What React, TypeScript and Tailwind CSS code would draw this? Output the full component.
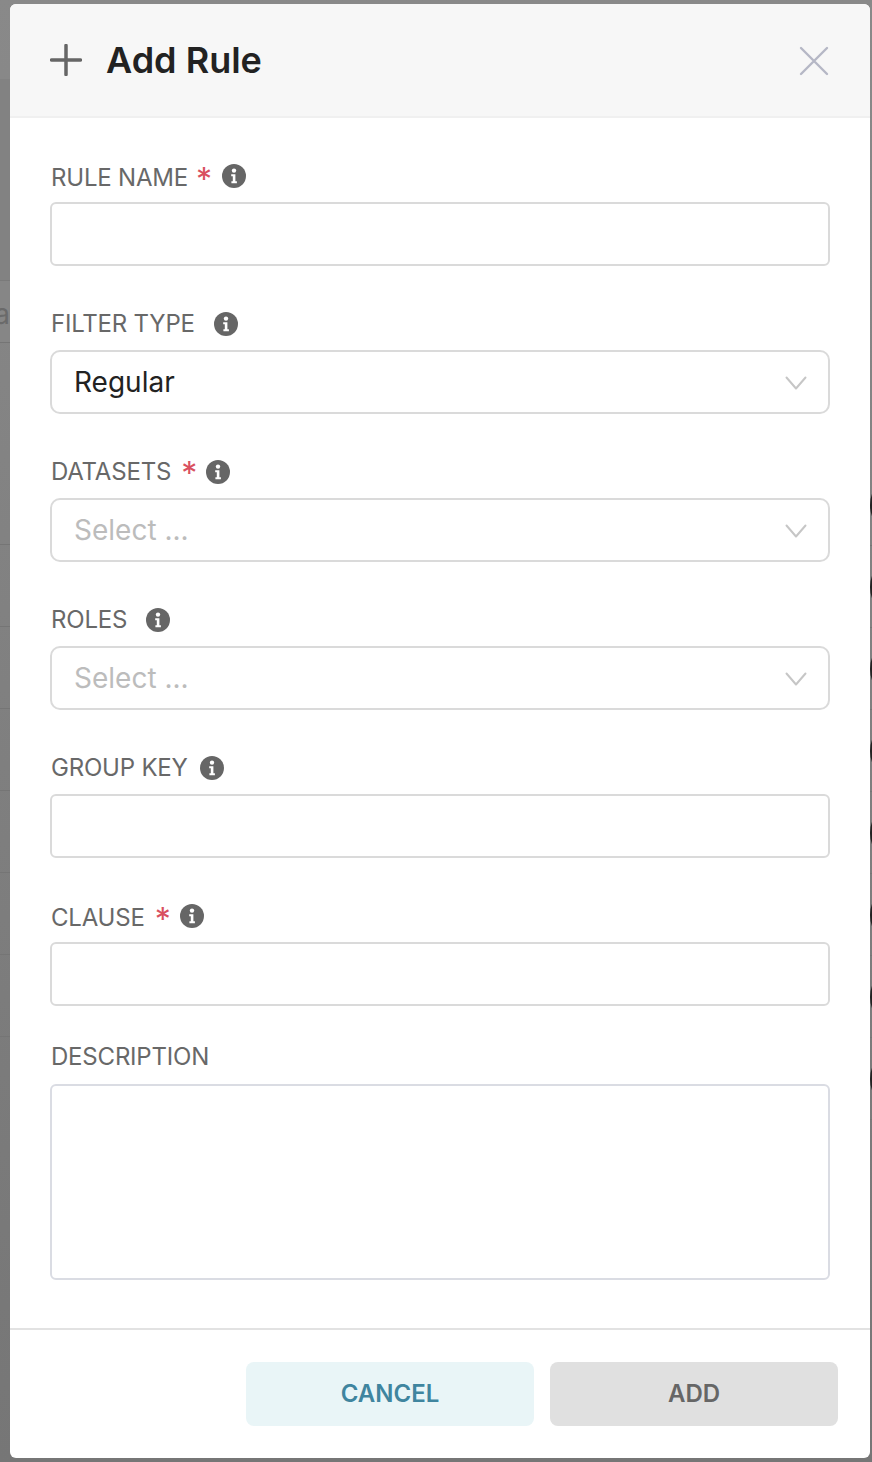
import React from "react";

const font = { fontFamily: "Inter, 'Liberation Sans', sans-serif" };

function Info() {
  return (
    <svg width="24" height="24" viewBox="0 0 24 24" className="block shrink-0">
      <circle cx="12" cy="12" r="12" fill="#666666" />
      <circle cx="12" cy="6.6" r="2.2" fill="#ffffff" />
      <path d="M9.2 10.3h4.2v7h1.5v2H9.4v-2h1.4v-5H9.2z" fill="#ffffff" />
    </svg>
  );
}

function Chevron() {
  return (
    <svg width="22" height="14" viewBox="0 0 22 14" fill="none" className="mt-[2px] block">
      <path d="M1.5 1.5 11 12.5 20.5 1.5" stroke="#c6c6c6" strokeWidth="2" strokeLinecap="round" strokeLinejoin="round" />
    </svg>
  );
}

function Label({ text, star, gap, className }: { text: string; star?: string; gap: string; className?: string }) {
  return (
    <div className={`flex h-[52px] items-center pl-px text-2xl leading-none tracking-[-0.2px] text-[#686868] ${className ?? ""}`}>
      <span>{text}</span>
      {star && <span className={`${star} h-[18px] text-[32px] leading-[22px] text-[#d9505f]`}>*</span>}
      <span className={gap}>
        <Info />
      </span>
    </div>
  );
}

function TextInput() {
  return <input className="block h-16 w-full rounded-[6px] border-2 border-[#dadada] bg-white px-6 text-[28px] outline-none" />;
}

function Select({ value, placeholder }: { value?: string; placeholder?: string }) {
  return (
    <div className="flex h-16 w-full items-center justify-between rounded-[10px] border-2 border-[#dadada] bg-white pl-[22px] pr-[21px] text-[28px]">
      {value ? <span className="text-[#222222]">{value}</span> : <span className="text-[#bcbcbc]">{placeholder}</span>}
      <Chevron />
    </div>
  );
}

const leftRows = [
  "h-[80px] border-b border-[#828282]",
  "h-[201px] border-b border-[#7a7a7a] bg-[#828282]",
  "h-[62px] border-b border-[#757575] bg-[#868686]",
  "h-[202px] border-b border-[#757575]",
  "h-[82px] border-b border-[#757575]",
  "h-[82px] border-b border-[#757575]",
  "h-[82px] border-b border-[#757575]",
  "h-[82px] border-b border-[#757575]",
  "h-[82px] border-b border-[#757575]",
  "h-[82px] border-b border-[#757575]",
];

const rightRows = Array.from({ length: 8 }, (_, i) => i);

export default function App() {
  return (
    <div style={font} className="flex h-[1462px] w-[872px] overflow-hidden bg-linear-to-b from-[#898989] to-[#767676]">
      <div className="flex w-[10px] shrink-0 flex-col">
        {leftRows.map((c, i) => (
          <div key={i} className={`${c} flex items-center justify-end overflow-hidden`}>
            {i === 2 && <span className="mt-[4px] text-[28px] leading-none text-[#6a6a6a]">a</span>}
          </div>
        ))}
      </div>

      <div className="mt-1 flex h-[1454px] w-[860px] shrink-0 flex-col overflow-hidden rounded-[6px] bg-white">
        <div className="flex h-[114px] items-center justify-between border-b-2 border-[#f0f0f0] bg-[#f7f7f7] pl-10 pr-[41px]">
          <div className="flex items-center gap-6">
            <svg width="32" height="32" viewBox="0 0 32 32" fill="none" className="block">
              <path d="M16 1.5v29M1.5 16h29" stroke="#666666" strokeWidth="3.5" strokeLinecap="round" />
            </svg>
            <span className="text-4xl font-semibold leading-none text-[#222222]">Add Rule</span>
          </div>
          <svg width="30" height="30" viewBox="0 0 30 30" fill="none" className="mt-px block">
            <path d="M2 2l26 26M28 2 2 28" stroke="#b5b7c5" strokeWidth="2.4" strokeLinecap="round" />
          </svg>
        </div>

        <div className="flex flex-1 flex-col gap-8 px-10 pt-8">
          <div>
            <Label text="RULE NAME" star="ml-[8px]" gap="ml-[10px] -mt-[4px]" className="pt-1" />
            <TextInput />
          </div>
          <div>
            <Label text="FILTER TYPE" gap="ml-[19px]" />
            <Select value="Regular" />
          </div>
          <div>
            <Label text="DATASETS" star="ml-[10px]" gap="ml-[9px]" />
            <Select placeholder="Select ..." />
          </div>
          <div>
            <Label text="ROLES" gap="ml-[19px]" />
            <Select placeholder="Select ..." />
          </div>
          <div>
            <Label text="GROUP KEY" gap="ml-[12px]" />
            <TextInput />
          </div>
          <div>
            <Label text="CLAUSE" star="ml-[10px]" gap="ml-[9px] -mt-[4px]" className="pt-1" />
            <TextInput />
          </div>
          <div className="-mt-[6px]">
            <Label text="DESCRIPTION" gap="hidden" className="pb-[2px]" />
            <textarea className="block h-[196px] w-full resize-none rounded-[6px] border-2 border-[#dadce3] bg-white outline-none" />
          </div>
        </div>

        <div className="flex justify-end gap-4 border-t-2 border-[#e2e2e2] p-8">
          <button className="h-16 w-[288px] rounded-[8px] bg-[#e9f5f7] text-2xl font-semibold text-[#3f859f]">CANCEL</button>
          <button className="h-16 w-[288px] rounded-[8px] bg-[#e0e0e0] text-2xl font-semibold text-[#666666]">ADD</button>
        </div>
      </div>

      <div className="flex w-[2px] shrink-0 flex-col overflow-hidden pt-[464px]">
        {rightRows.map((i) => (
          <div key={i} className="flex h-[82px] shrink-0 items-center border-b border-[#757575]">
            <div className="h-[62px] w-[62px] shrink-0 rounded-full border-2 border-[#222222]" />
          </div>
        ))}
      </div>
    </div>
  );
}
